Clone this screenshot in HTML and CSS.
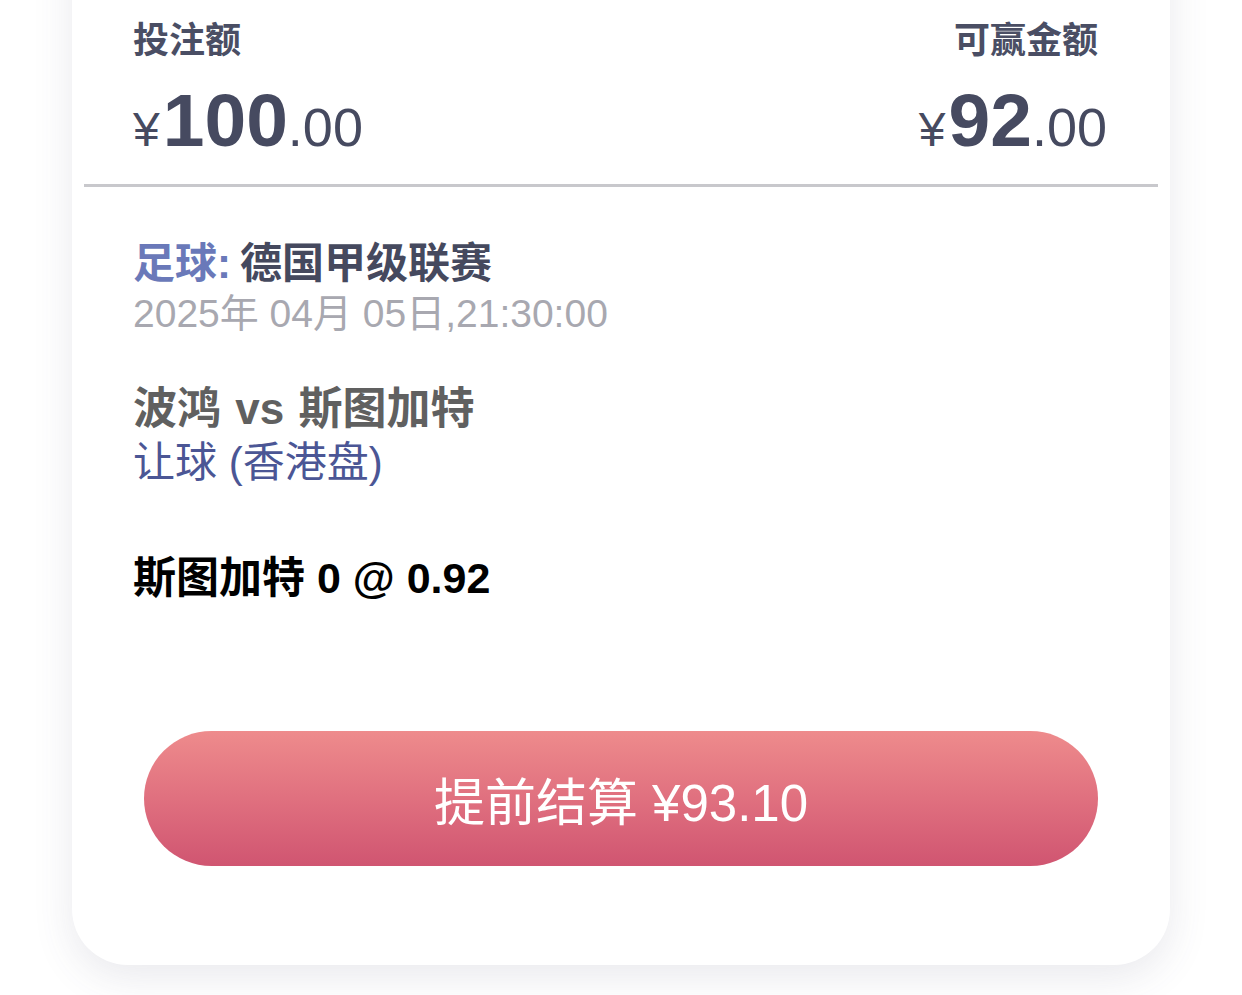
FILE: index.html
```html
<!DOCTYPE html>
<html lang="zh-CN">
<head>
<meta charset="utf-8">
<title>注单详情</title>
<link rel="stylesheet" href="styles.css">
</head>
<body>
<div class="page">
  <div class="card">
    <div class="summary">
      <div class="col col-left">
        <div class="label">投注额</div>
        <div class="amount"><span class="cur">¥</span><span class="int">100</span><span class="dec">.00</span></div>
      </div>
      <div class="col col-right">
        <div class="label label-right">可赢金额</div>
        <div class="amount"><span class="cur">¥</span><span class="int">92</span><span class="dec">.00</span></div>
      </div>
    </div>
    <div class="divider"></div>
    <div class="details">
      <div class="league"><span class="sport">足球:</span><span class="league-name">德国甲级联赛</span></div>
      <div class="date">2025年 04月 05日,21:30:00</div>
      <div class="teams">波鸿 vs 斯图加特</div>
      <div class="market">让球 (香港盘)</div>
      <div class="selection">斯图加特 0 @ 0.92</div>
    </div>
    <div class="actions">
      <button class="cashout">提前结算 ¥93.10</button>
    </div>
  </div>
</div>
</body>
</html>
```
FILE: styles.css
```css
html, body {
  margin: 0;
  padding: 0;
  background: #ffffff;
}
body {
  font-family: "Liberation Sans", "Noto Sans CJK SC", sans-serif;
  overflow: hidden;
}
.page {
  display: flow-root;
  padding: 0 72px 60px;
}
.card {
  margin-top: -60px;
  background: #ffffff;
  border-radius: 0 0 56px 56px;
  box-shadow: 0 12px 40px rgba(70, 75, 110, 0.12);
  padding: 79px 0 99px;
}
.summary {
  display: flex;
  justify-content: space-between;
  padding: 0 63px 0 61px;
}
.col {
  display: flex;
  flex-direction: column;
}
.col-right {
  align-items: flex-end;
}
.label {
  font-size: 36px;
  line-height: 44px;
  font-weight: 600;
  color: #4a4e64;
}
.label-right {
  margin-right: 9px;
}
.amount {
  margin-top: 20px;
  font-size: 75px;
  line-height: 1;
  color: #464a60;
  white-space: nowrap;
}
.cur {
  font-size: 48px;
  font-weight: 400;
  margin-right: 3px;
}
.int {
  font-size: 75px;
  font-weight: 700;
}
.dec {
  font-size: 54px;
  font-weight: 400;
}
.divider {
  margin: 26px 12px 0;
  height: 3px;
  background: #c8c8cc;
}
.details {
  padding: 51px 61px 0;
  display: flex;
  flex-direction: column;
}
.league {
  font-size: 42px;
  line-height: 52px;
  font-weight: 700;
  color: #45495e;
}
.sport {
  color: #6a79b9;
}
.league-name {
  margin-left: 9px;
}
.date {
  font-size: 39px;
  line-height: 48px;
  color: #a8a8b0;
}
.teams {
  margin-top: 45px;
  font-size: 44px;
  line-height: 52px;
  font-weight: 700;
  color: #606060;
  word-spacing: 2px;
}
.market {
  margin-top: 2px;
  font-size: 42px;
  line-height: 52px;
  color: #4b5695;
}
.selection {
  margin-top: 63px;
  font-size: 43px;
  line-height: 52px;
  font-weight: 700;
  color: #000000;
}
.actions {
  padding: 127px 72px 0;
}
.cashout {
  display: block;
  width: 100%;
  height: 135px;
  border: none;
  border-radius: 68px;
  background: linear-gradient(180deg, #ee8b8c 0%, #e0707f 50%, #d05571 100%);
  color: #ffffff;
  font-family: "Liberation Sans", "Noto Sans CJK SC", sans-serif;
  font-size: 51px;
  font-weight: 400;
  padding: 0;
  cursor: pointer;
}
```
